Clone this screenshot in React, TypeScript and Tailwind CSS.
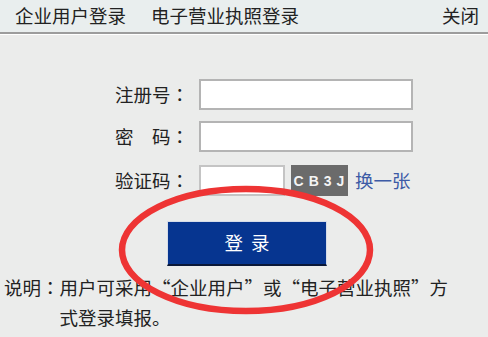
import React from "react";

const cjk = { fontFamily: '"Noto Sans CJK SC", "Microsoft YaHei", sans-serif' };
const colon = { fontFamily: '"Noto Sans CJK TC", sans-serif' };

const Colon = () => <span style={colon}>：</span>;

const Field: React.FC<{ label: string; children: React.ReactNode }> = ({ label, children }) => (
  <div className="flex items-center gap-[10px]">
    <span className="w-[74px] shrink-0 whitespace-nowrap text-[18.5px] leading-none text-[#222]">
      {label}
      <Colon />
    </span>
    {children}
  </div>
);

export default function App() {
  return (
    <div className="relative w-[488px] h-[337px] overflow-hidden bg-[#ebeceb]" style={cjk}>
      {/* header */}
      <div className="flex items-center h-[34px] bg-[#e9eeee] px-[15px] text-[18.5px] text-[#222] border-b-2 border-[#9c9c9c]">
        <span>企业用户登录</span>
        <span className="ml-[25px]">电子营业执照登录</span>
        <span className="ml-auto mr-[-6px]">关闭</span>
      </div>
      <div className="h-px bg-white" />

      {/* form */}
      <div className="flex flex-col gap-[11px] pl-[115px] pt-[44px]">
        <Field label="注册号">
          <input className="w-[214px] h-[31px] bg-white border-2 border-[#b4b4b4] outline-none" />
        </Field>
        <Field label="密　码">
          <input type="password" className="w-[214px] h-[31px] bg-white border-2 border-[#b4b4b4] outline-none" />
        </Field>
        <div className="flex items-center gap-[10px] mt-[2px]">
          <span className="w-[74px] shrink-0 whitespace-nowrap text-[18.5px] leading-none text-[#222]">
            验证码
            <Colon />
          </span>
          <input className="w-[86px] h-[31px] bg-white border-2 border-[#c4c4c4] outline-none" />
          <div
            className="ml-[-4px] flex items-center justify-center w-[57px] h-[31px] bg-[#6b6b6b] text-[#f4f4f4] text-[14px] font-bold tracking-[5px] pl-[4px] pt-[2px]"
            style={{ fontFamily: '"Liberation Sans", sans-serif' }}
          >
            CB3J
          </div>
          <span className="ml-[-3px] whitespace-nowrap text-[18.5px] text-[#3d5ba6] leading-none">换一张</span>
        </div>
      </div>

      {/* button */}
      <div className="pl-[167px] mt-[25px]">
        <button className="w-[160px] h-[45px] bg-[#063590] border border-[#d6dce8] border-b-2 border-b-[#0a1838] text-white text-[18.5px] tracking-[8px] pl-[8px]">
          登录
        </button>
      </div>

      {/* note */}
      <div className="flex mt-[6px] pl-[4px] text-[18.5px] leading-[30px] text-[#222]">
        <span className="shrink-0 whitespace-nowrap">
          说明
          <Colon />
        </span>
        <p className="whitespace-nowrap">
          用户可采用“企业用户”或“电子营业执照”方
          <br />
          式登录填报。
        </p>
      </div>

      {/* red mark */}
      <svg className="absolute inset-0 pointer-events-none" width="488" height="337" viewBox="0 0 488 337">
        <ellipse cx="246" cy="250" rx="124" ry="61" fill="none" stroke="#ee3434" strokeWidth="6.5" />
      </svg>
    </div>
  );
}
